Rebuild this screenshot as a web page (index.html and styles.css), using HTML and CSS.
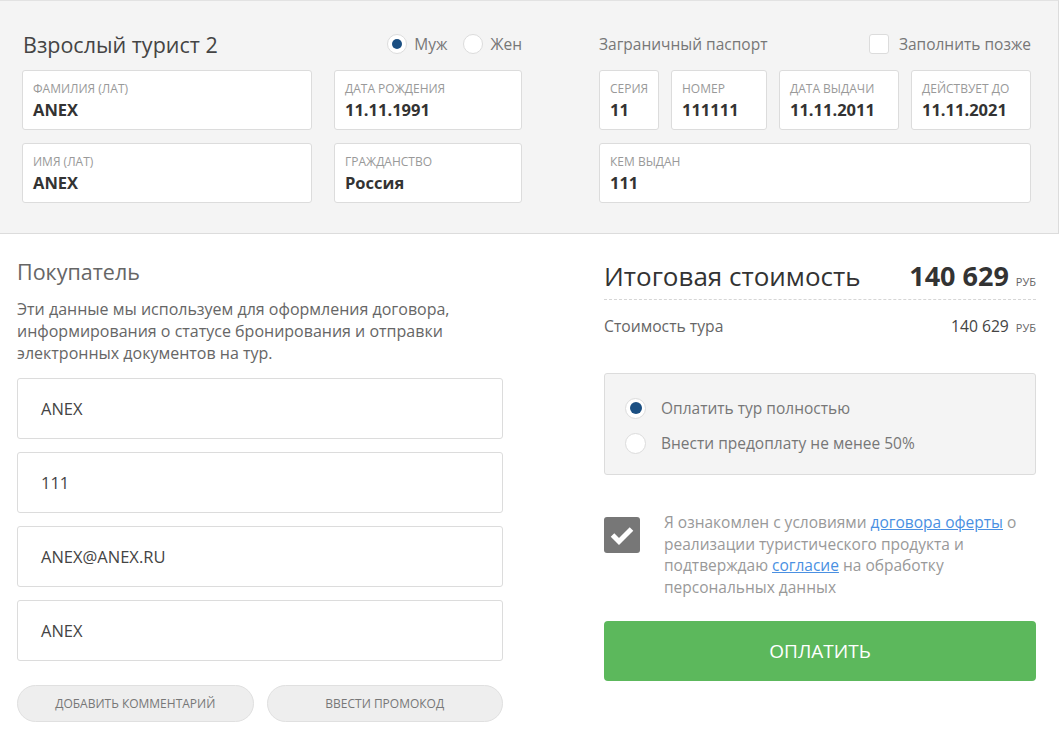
FILE: index.html
```html
<!DOCTYPE html>
<html lang="ru">
<head>
<meta charset="utf-8">
<title>Бронирование</title>
<link rel="stylesheet" href="styles.css">
</head>
<body>
<section class="top">
  <div class="tourist">
    <div class="head">
      <h2 class="title">Взрослый турист 2</h2>
      <div class="genders">
        <label class="radio-opt"><span class="radio checked"></span>Муж</label>
        <label class="radio-opt"><span class="radio"></span>Жен</label>
      </div>
    </div>
    <div class="grid tourist-grid">
      <div class="field"><div class="lbl">Фамилия (лат)</div><div class="val">ANEX</div></div>
      <div class="field"><div class="lbl">Дата рождения</div><div class="val">11.11.1991</div></div>
      <div class="field"><div class="lbl">Имя (лат)</div><div class="val">ANEX</div></div>
      <div class="field"><div class="lbl">Гражданство</div><div class="val">Россия</div></div>
    </div>
  </div>
  <div class="passport">
    <div class="head">
      <h3 class="subtitle">Заграничный паспорт</h3>
      <label class="later"><span class="box"></span>Заполнить позже</label>
    </div>
    <div class="grid passport-grid">
      <div class="field"><div class="lbl">Серия</div><div class="val">11</div></div>
      <div class="field"><div class="lbl">Номер</div><div class="val">111111</div></div>
      <div class="field"><div class="lbl">Дата выдачи</div><div class="val">11.11.2011</div></div>
      <div class="field"><div class="lbl">Действует до</div><div class="val">11.11.2021</div></div>
      <div class="field wide"><div class="lbl">Кем выдан</div><div class="val">111</div></div>
    </div>
  </div>
</section>

<section class="bottom">
  <div class="buyer">
    <h2 class="buyer-title">Покупатель</h2>
    <p class="desc">Эти данные мы используем для оформления договора, информирования о статусе бронирования и отправки электронных документов на тур.</p>
    <div class="inputs">
      <div class="input">ANEX</div>
      <div class="input">111</div>
      <div class="input">ANEX@ANEX.RU</div>
      <div class="input">ANEX</div>
    </div>
    <div class="pills">
      <button class="pill">Добавить комментарий</button>
      <button class="pill">Ввести промокод</button>
    </div>
  </div>

  <div class="summary">
    <div class="total">
      <span class="total-label">Итоговая стоимость</span>
      <span class="total-sum"><b>140 629</b><span class="cur">руб</span></span>
    </div>
    <div class="line">
      <span>Стоимость тура</span>
      <span class="line-sum">140 629<span class="cur">руб</span></span>
    </div>
    <div class="pay-box">
      <label class="pay-opt"><span class="radio big checked"></span>Оплатить тур полностью</label>
      <label class="pay-opt"><span class="radio big"></span>Внести предоплату не менее 50%</label>
    </div>
    <div class="agree">
      <span class="check">
        <svg width="36" height="36" viewBox="0 0 36 36"><polyline points="8.5,18 15,24.5 27.5,12" fill="none" stroke="#fff" stroke-width="5" stroke-linejoin="miter"/></svg>
      </span>
      <p class="agree-text">Я ознакомлен с условиями <a href="#">договора оферты</a> о реализации туристического продукта и подтверждаю <a href="#">согласие</a> на обработку персональных данных</p>
    </div>
    <button class="pay-btn">Оплатить</button>
  </div>
</section>
</body>
</html>
```

FILE: styles.css
```css
* { box-sizing: border-box; }
body {
  margin: 0;
  font-family: "Open Sans", "Noto Sans", sans-serif;
  color: #333;
  background: #fff;
}
h2, h3, p { margin: 0; font-weight: 400; }
button { font-family: inherit; }

.top {
  display: flex;
  gap: 77px;
  background: #f4f4f4;
  border-top: 1px solid #e2e2e2;
  border-bottom: 1px solid #dcdcdc;
  border-right: 1px solid #dcdcdc;
  padding: 29px 27px 30px 22px;
}
.tourist { width: 500px; }
.passport { width: 432px; }
.head {
  height: 28px;
  margin-bottom: 12px;
  display: flex;
  align-items: center;
  justify-content: space-between;
}
.title { font-size: 21.5px; color: #444; padding-left: 1px; }
.subtitle { font-size: 15.5px; color: #777; }
.genders { display: flex; gap: 16px; }
.radio-opt {
  display: flex;
  align-items: center;
  gap: 7px;
  font-size: 15.5px;
  color: #777;
}
.radio {
  width: 20px;
  height: 20px;
  border-radius: 50%;
  background: #fff;
  border: 1px solid #dcdcdc;
  display: inline-flex;
  align-items: center;
  justify-content: center;
  flex: none;
}
.radio.checked::after {
  content: "";
  width: 10px;
  height: 10px;
  border-radius: 50%;
  background: #1b4f82;
}
.radio.big { width: 21px; height: 21px; }
.radio.big.checked::after { width: 12px; height: 12px; }
.later {
  display: flex;
  align-items: center;
  gap: 10px;
  font-size: 15.5px;
  color: #777;
}
.box {
  width: 20px;
  height: 20px;
  background: #fff;
  border: 1px solid #dcdcdc;
  border-radius: 3px;
}
.grid { display: grid; row-gap: 13px; grid-auto-rows: 60px; }
.tourist-grid { grid-template-columns: 290px 188px; column-gap: 22px; }
.passport-grid { grid-template-columns: 60px 96px 120px 120px; column-gap: 12px; }
.wide { grid-column: 1 / -1; }
.field {
  background: #fff;
  border: 1px solid #dcdcdc;
  border-radius: 3px;
  padding: 10px 10px 0 10px;
}
.lbl {
  font-size: 12px;
  line-height: 16px;
  color: #999;
  text-transform: uppercase;
  white-space: nowrap;
}
.val {
  font-size: 16.5px;
  font-weight: 700;
  line-height: 24px;
  margin-top: 1px;
  color: #333;
}

.bottom {
  display: flex;
  gap: 101px;
  padding: 24px 0 0 17px;
}
.buyer { width: 486px; }
.buyer-title { font-size: 21.5px; line-height: 28px; color: #666; }
.desc {
  margin-top: 12px;
  font-size: 16px;
  line-height: 22px;
  color: #666;
}
.inputs {
  margin-top: 14px;
  display: flex;
  flex-direction: column;
  gap: 13px;
}
.input {
  height: 61px;
  border: 1px solid #dcdcdc;
  border-radius: 3px;
  padding-left: 23px;
  display: flex;
  align-items: center;
  font-size: 16.5px;
  color: #444;
}
.pills {
  margin-top: 24px;
  display: grid;
  grid-template-columns: 1fr 1fr;
  gap: 13px;
}
.pill {
  height: 37px;
  border-radius: 19px;
  border: 1px solid #e0e0e0;
  background: #eee;
  color: #777;
  font-size: 12px;
  text-transform: uppercase;
}

.summary { width: 432px; }
.total {
  height: 42px;
  display: flex;
  justify-content: space-between;
  align-items: baseline;
  border-bottom: 1px dashed #d6d6d6;
  padding-top: 1px;
  line-height: 34px;
}
.total-label { font-size: 26px; color: #333; }
.total-sum b { font-size: 27px; font-weight: 700; color: #333; }
.cur {
  font-size: 11px;
  text-transform: uppercase;
  color: #666;
  margin-left: 7px;
}
.line {
  margin-top: 15px;
  display: flex;
  justify-content: space-between;
  font-size: 15.7px;
  line-height: 22px;
  color: #666;
}
.line-sum { color: #444; }
.pay-box {
  margin-top: 34px;
  background: #f4f4f4;
  border: 1px solid #dcdcdc;
  border-radius: 3px;
  padding: 23px 20px 20px 20px;
  display: flex;
  flex-direction: column;
  gap: 13px;
}
.pay-opt {
  display: flex;
  align-items: center;
  gap: 15px;
  font-size: 15.5px;
  line-height: 22px;
  color: #777;
}
.agree {
  margin-top: 37px;
  display: flex;
  gap: 24px;
  align-items: flex-start;
}
.check {
  width: 36px;
  height: 36px;
  border-radius: 3px;
  background: #777;
  margin-top: 5px;
  flex: none;
  display: block;
}
.check svg { display: block; }
.agree-text {
  font-size: 15.5px;
  line-height: 21.5px;
  color: #999;
}
.agree-text a { color: #4a90e2; }
.pay-btn {
  margin-top: 23px;
  width: 100%;
  height: 60px;
  border: none;
  border-radius: 4px;
  background: #5cb85c;
  color: #fff;
  font-size: 19px;
  text-transform: uppercase;
}
```
